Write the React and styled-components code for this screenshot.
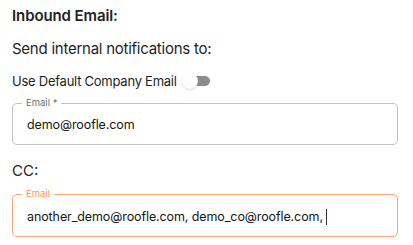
import styled, { createGlobalStyle } from "styled-components"

const GlobalStyle = createGlobalStyle`
  body {
    margin: 0;
    background: #ffffff;
    font-family: Inter, "Noto Sans", sans-serif;
    color: #222;
  }
`

const Panel = styled.section`
  display: flex;
  flex-direction: column;
  padding: 6px 15px 0 12px;
`

const Title = styled.h2`
  margin: 0;
  font-size: 15px;
  font-weight: 600;
  line-height: 20px;
  letter-spacing: -0.1px;
  color: #222;
`

const Subtitle = styled.p`
  margin: 12.5px 0 0;
  font-size: 15px;
  line-height: 20px;
  letter-spacing: -0.25px;
  color: #1e1e1e;
`

const ToggleRow = styled.div`
  display: flex;
  align-items: center;
  height: 20px;
  margin-top: 12.5px;
  font-size: 13px;
  letter-spacing: -0.25px;
  color: #1e1e1e;
`

const Track = styled.span`
  position: relative;
  display: inline-block;
  width: 24px;
  height: 10px;
  margin-left: 9px;
  border-radius: 5px;
  background: #8c8c8c;
`

const Thumb = styled.span`
  position: absolute;
  left: -4px;
  top: -3px;
  width: 16px;
  height: 16px;
  border-radius: 50%;
  background: #fff;
  box-shadow: 0 1px 2px rgba(0, 0, 0, 0.14), 0 0 1px rgba(0, 0, 0, 0.08);
`

const Field = styled.div`
  position: relative;
  display: flex;
  align-items: center;
  height: ${(p) => p.$h}px;
  margin-top: ${(p) => p.$top}px;
  padding: 2px 14px 0;
  box-sizing: border-box;
  border: 1px solid ${(p) => (p.$focused ? "#fba47a" : "#c2c2c2")};
  border-radius: 5px;
`

const FieldLabel = styled.span`
  position: absolute;
  top: -6px;
  left: 9px;
  padding: 0 4px;
  background: #fff;
  font-size: 9.5px;
  line-height: 10px;
  color: ${(p) => (p.$focused ? "#f7935f" : "#707070")};
`

const Value = styled.span`
  font-size: 12.5px;
  line-height: 20px;
  letter-spacing: -0.1px;
  color: #161616;
  white-space: nowrap;
`

const Caret = styled.span`
  display: inline-block;
  width: 1px;
  height: 16px;
  margin-left: 3px;
  vertical-align: -4px;
  background: #333;
`

const Label = styled.p`
  margin: 16px 0 0;
  font-size: 15px;
  line-height: 20px;
  color: #1e1e1e;
`

export default function App() {
  return (
    <>
      <GlobalStyle />
      <Panel>
        <Title>Inbound Email:</Title>
        <Subtitle>Send internal notifications to:</Subtitle>
        <ToggleRow>
          Use Default Company Email
          <Track>
            <Thumb />
          </Track>
        </ToggleRow>
        <Field $top={12} $h={42}>
          <FieldLabel>Email *</FieldLabel>
          <Value>demo@roofle.com</Value>
        </Field>
        <Label>CC:</Label>
        <Field $top={13} $h={43} $focused>
          <FieldLabel $focused>Email</FieldLabel>
          <Value>
            another_demo@roofle.com, demo_co@roofle.com,
            <Caret />
          </Value>
        </Field>
      </Panel>
    </>
  )
}
